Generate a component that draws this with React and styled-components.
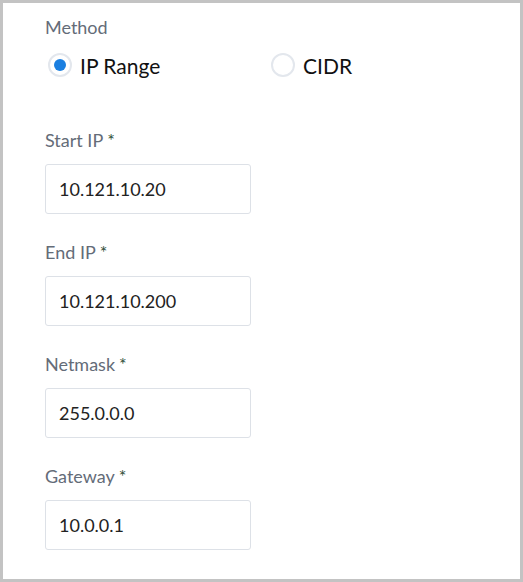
import React, { useState } from "react";
import styled, { createGlobalStyle } from "styled-components";

const GlobalStyle = createGlobalStyle`
  html, body {
    margin: 0;
    padding: 0;
    background: #fff;
  }
  * {
    box-sizing: border-box;
  }
`;

const Frame = styled.div`
  width: 523px;
  height: 582px;
  border: 3px solid #c3c3c3;
  background: #fff;
  padding: 12px 0 0 42px;
  font-family: Lato, "Open Sans", sans-serif;
`;

const Field = styled.div`
  display: flex;
  flex-direction: column;
  margin-bottom: ${(props) => props.gap || 0}px;
`;

const Label = styled.label`
  font-size: 18px;
  line-height: 24px;
  color: #646c78;
  height: 24px;
`;

const Required = styled.span`
  color: #2f4f3a;
  margin-left: 4px;
`;

const RadioGroup = styled.div`
  display: flex;
  align-items: center;
  margin-top: 6px;
  height: 40px;
`;

const RadioOption = styled.label`
  display: flex;
  align-items: center;
  width: ${(props) => props.width || "auto"};
  cursor: pointer;
`;

const RadioCircle = styled.span`
  width: 24px;
  height: 24px;
  border-radius: 50%;
  border: 2px solid #e3e7ed;
  display: flex;
  align-items: center;
  justify-content: center;
  margin-left: 3px;
  &::after {
    content: "";
    width: 12px;
    height: 12px;
    border-radius: 50%;
    background: ${(props) => (props.checked ? "#1b7fe0" : "transparent")};
  }
`;

const RadioText = styled.span`
  font-size: 21px;
  color: #111;
  margin-left: 8px;
`;

const Input = styled.input`
  margin-top: 12px;
  width: 206px;
  height: 50px;
  border: 1px solid #dde1e7;
  border-radius: 3px;
  padding: 0 13px;
  font-family: Lato, "Open Sans", sans-serif;
  font-size: 18px;
  color: #222;
  outline: none;
  background: #fff;
`;

const fields = [
  { label: "Start IP", value: "10.121.10.20" },
  { label: "End IP", value: "10.121.10.200" },
  { label: "Netmask", value: "255.0.0.0" },
  { label: "Gateway", value: "10.0.0.1" },
];

export default function App() {
  const [method, setMethod] = useState("range");

  return (
    <Frame>
      <GlobalStyle />
      <Field gap={43}>
        <Label>Method</Label>
        <RadioGroup>
          <RadioOption width="223px" onClick={() => setMethod("range")}>
            <RadioCircle checked={method === "range"} />
            <RadioText>IP Range</RadioText>
          </RadioOption>
          <RadioOption onClick={() => setMethod("cidr")}>
            <RadioCircle checked={method === "cidr"} />
            <RadioText>CIDR</RadioText>
          </RadioOption>
        </RadioGroup>
      </Field>
      {fields.map((f) => (
        <Field key={f.label} gap={26}>
          <Label>
            {f.label}
            <Required>*</Required>
          </Label>
          <Input defaultValue={f.value} />
        </Field>
      ))}
    </Frame>
  );
}
